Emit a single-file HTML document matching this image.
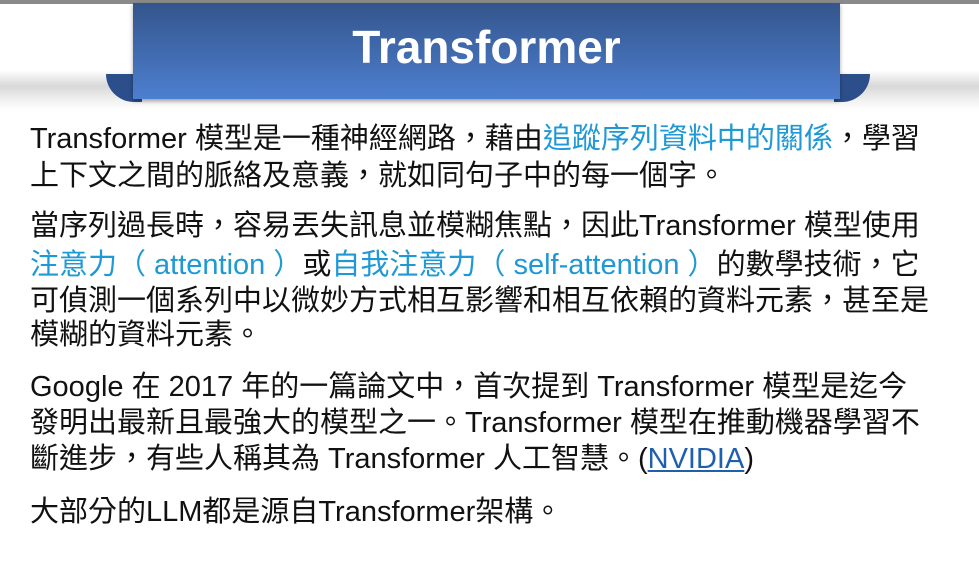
<!DOCTYPE html>
<html><head><meta charset="utf-8"><style>
body{margin:0;width:979px;height:567px;overflow:hidden;background:#fff;position:relative;font-family:"Liberation Sans","Noto Sans CJK TC",sans-serif}
.top{position:absolute;left:0;top:0;width:979px;height:4px;background:#8a8a8a}
.band{position:absolute;left:0;top:70px;width:979px;height:40px;background:linear-gradient(#fff,#d8d8d8 40%,#f4f4f4 80%,#fff)}
.curl{position:absolute;top:74px;width:36px;height:28px;background:#2c4f8c;}
.cl{left:106px;border-radius:0 0 0 28px}
.cr{left:834px;border-radius:0 0 28px 0}
.banner{position:absolute;left:133px;top:3px;width:707px;height:96px;background:linear-gradient(#34558c,#4d7fd0);box-shadow:0 2px 4px rgba(0,0,0,.35)}
.title{position:absolute;left:133px;width:707px;top:18px;text-align:center;color:#fff;font-weight:bold;font-size:46px;line-height:58px}
.l{position:absolute;left:30px;white-space:nowrap;font-size:29px;line-height:34px;color:#111}
.b{color:#1f98d6}
.n{color:#1f5fb0;text-decoration:underline}
</style></head><body>
<div class="top"></div>
<div class="band"></div>
<div class="curl cl"></div><div class="curl cr"></div>
<div class="banner"></div>
<div class="title">Transformer</div>
<div class="l" style="top:122px">Transformer 模型是一種神經網路，藉由<span class="b">追蹤序列資料中的關係</span>，學習</div>
<div class="l" style="top:159px">上下文之間的脈絡及意義，就如同句子中的每一個字。</div>
<div class="l" style="top:209px">當序列過長時，容易丟失訊息並模糊焦點，因此Transformer 模型使用</div>
<div class="l" style="top:248px"><span class="b">注意力（ attention ）</span>或<span class="b">自我注意力（ self-attention ）</span>的數學技術，它</div>
<div class="l" style="top:284px">可偵測一個系列中以微妙方式相互影響和相互依賴的資料元素，甚至是</div>
<div class="l" style="top:318px">模糊的資料元素。</div>
<div class="l" style="top:370px">Google 在 2017 年的一篇論文中，首次提到 Transformer 模型是迄今</div>
<div class="l" style="top:406px">發明出最新且最強大的模型之一。Transformer 模型在推動機器學習不</div>
<div class="l" style="top:442px">斷進步，有些人稱其為 Transformer 人工智慧。(<span class="n">NVIDIA</span>)</div>
<div class="l" style="top:495px">大部分的LLM都是源自Transformer架構。</div>
</body></html>
